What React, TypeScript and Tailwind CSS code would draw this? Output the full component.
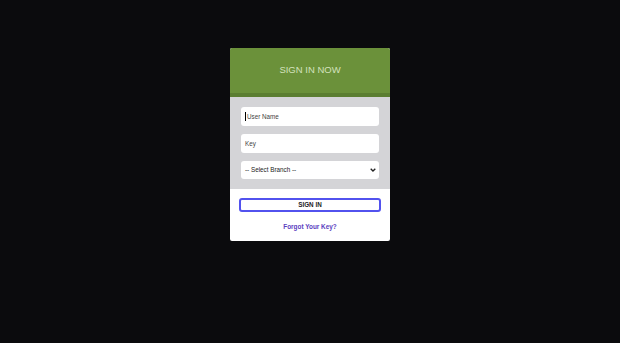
import React from 'react';

// ログイン画面
const App: React.FC = () => {
  return (
    <div className="min-h-[343px] bg-[#0b0b0d] flex justify-center pt-[48px]" style={{ fontFamily: '"Liberation Sans", Arial, sans-serif' }}>
      <div className="w-[160px] h-[193px] bg-white rounded-[2px] overflow-hidden flex flex-col">
        <div className="h-[45px] bg-[#6b913a] flex items-center justify-center text-[9.5px] text-[#d3e2bd]">
          SIGN IN NOW
        </div>
        <div className="h-[4px] bg-[#5b7e31]" />
        <div className="bg-[#d4d4d7] px-[11px] pt-[10px] pb-[10px] flex flex-col gap-[8px]">
          <div className="h-[19px] bg-white rounded-[3px] flex items-center px-[4px] text-[6.3px] text-[#444]">
            <span className="w-px h-[9px] bg-black mr-px" />User Name
          </div>
          <div className="h-[19px] bg-white rounded-[3px] flex items-center px-[4px] text-[6.3px] text-[#444]">Key</div>
          <div className="h-[18px] bg-white rounded-[3px] flex items-center justify-between pl-[4px] pr-[3px] text-[6.3px] text-[#222]">
            <span>-- Select Branch --</span>
            <svg width="6" height="4" viewBox="0 0 6 4"><path d="M0.7 0.7 L3 3 L5.3 0.7" stroke="#222" strokeWidth="1.3" fill="none" /></svg>
          </div>
        </div>
        <div className="px-[9px] pt-[9px] flex flex-col items-center">
          <button className="w-full h-[14px] border-2 border-[#5252ee] rounded-[3px] text-[6.3px] font-bold text-[#222] flex items-center justify-center">
            SIGN IN
          </button>
          <a className="mt-[10px] text-[6.4px] font-semibold text-[#5a3ec0]">Forgot Your Key?</a>
        </div>
      </div>
    </div>
  );
};

export default App;
